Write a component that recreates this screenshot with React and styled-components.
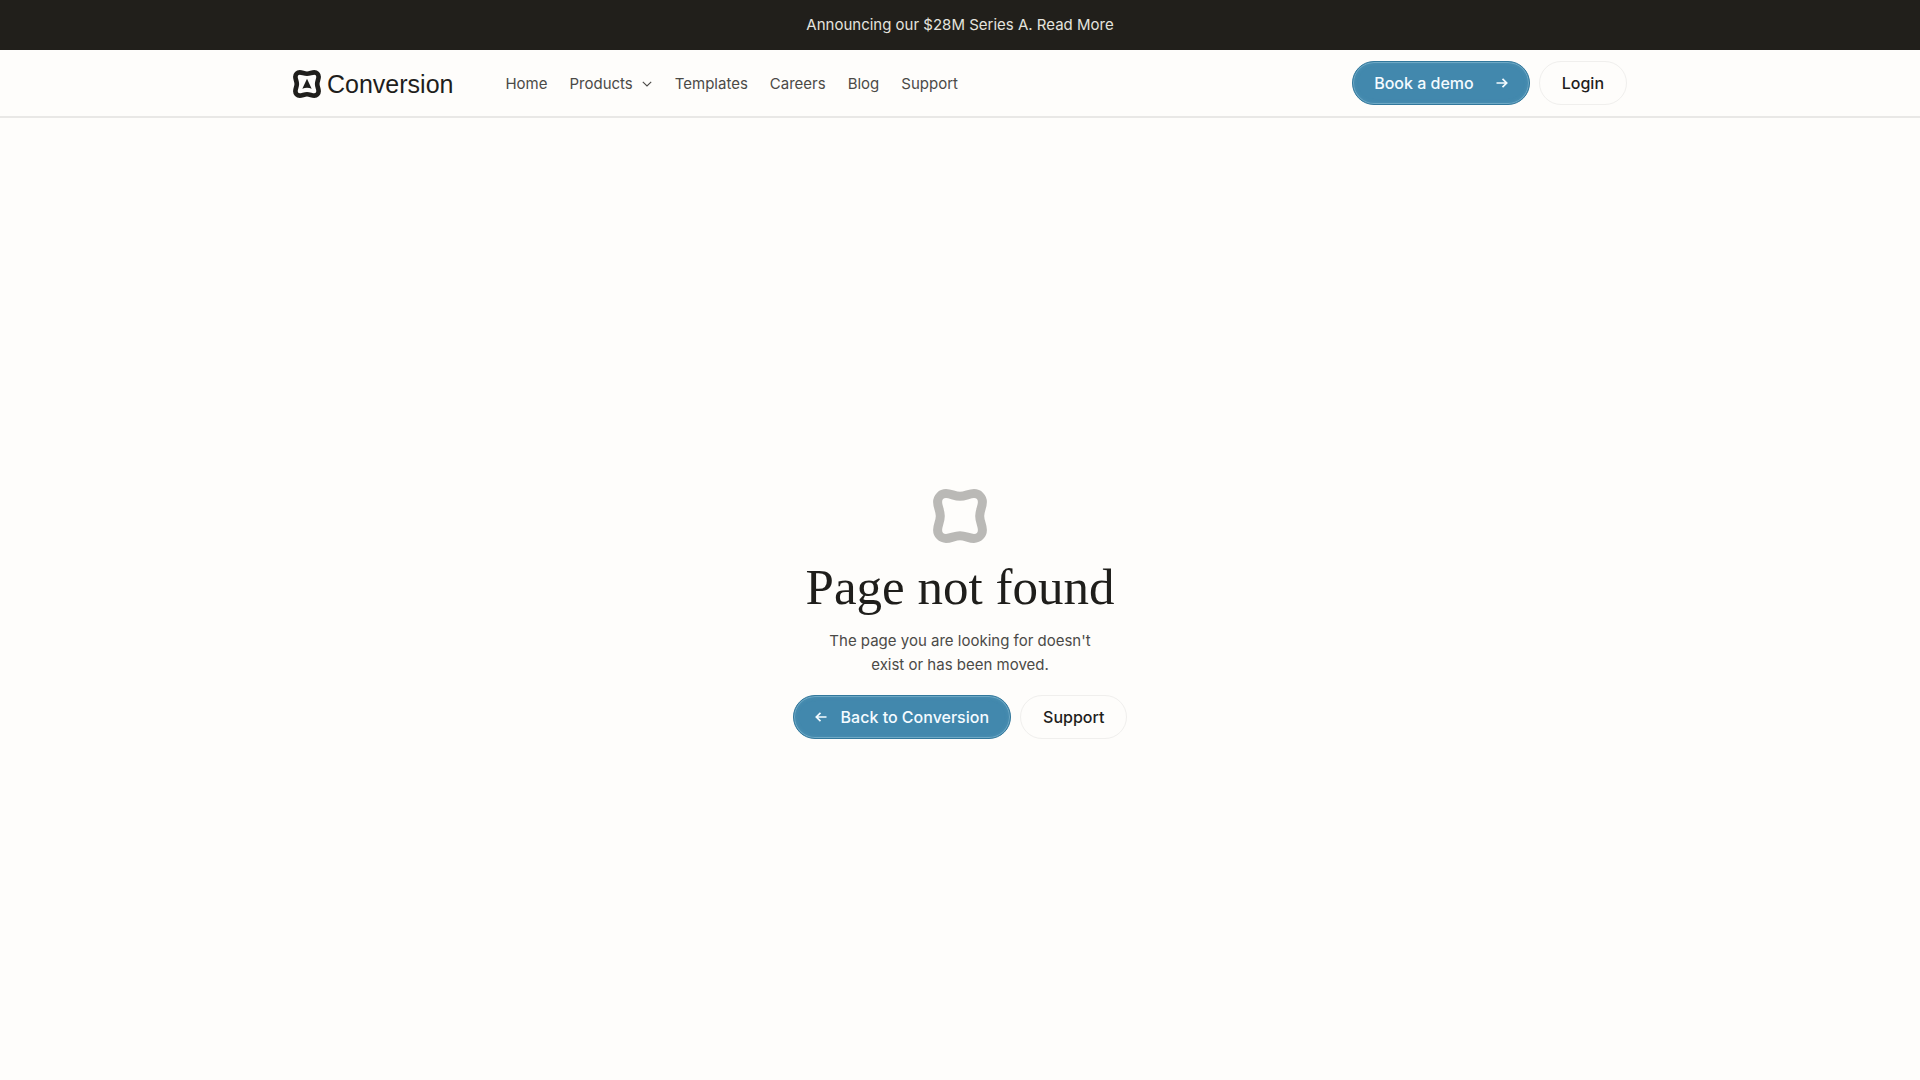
import React from "react";
import styled, { createGlobalStyle, css } from "styled-components";

const GlobalStyle = createGlobalStyle`
  *, *::before, *::after { box-sizing: border-box; }
  html, body { margin: 0; padding: 0; }
  body {
    background: #fefdfb;
    color: #1f1e1b;
    font-family: Inter, "Liberation Sans", sans-serif;
    font-size: 15px;
    line-height: 24px;
  }
`;

const Page = styled.div`
  display: flex;
  flex-direction: column;
  min-height: 100vh;
`;

const Banner = styled.a`
  display: flex;
  align-items: center;
  justify-content: center;
  height: 50px;
  background: #211f1b;
  color: #e4e3de;
  text-decoration: none;
`;

const Header = styled.header`
  border-bottom: 2px solid #e9e8e6;
  padding: 11px 24px;
`;

const HeaderInner = styled.div`
  display: flex;
  align-items: center;
  justify-content: space-between;
  max-width: 1334px;
  margin: 0 auto;
`;

const Left = styled.div`
  display: flex;
  align-items: center;
  gap: 52px;
  padding-top: 2px;
`;

const Brand = styled.a`
  display: flex;
  align-items: center;
  gap: 6px;
  color: #1f1e1b;
  font-family: "Liberation Sans", Arial, sans-serif;
  font-size: 25px;
  line-height: 28px;
  text-decoration: none;
`;

const Nav = styled.nav`
  display: flex;
  align-items: center;
  gap: 22px;
`;

const navItem = css`
  color: #4b4a47;
  font: inherit;
  text-decoration: none;
`;

const NavLink = styled.a`
  ${navItem}
`;

const NavMenu = styled.button`
  ${navItem}
  display: flex;
  align-items: center;
  gap: 8px;
  padding: 0;
  border: 0;
  background: none;
  cursor: pointer;
`;

const Actions = styled.div`
  display: flex;
  gap: 9px;
`;

const Pill = styled.a`
  display: flex;
  align-items: center;
  gap: ${(p) => p.$gap || "0"};
  height: 44px;
  padding: 0 ${(p) => (p.$primary ? "21px" : "22px")};
  border: 1px solid ${(p) => (p.$primary ? "#32789c" : "#f0efed")};
  border-radius: 22px;
  background: ${(p) => (p.$primary ? "#4288ad" : "#fefdfb")};
  box-shadow: ${(p) =>
    p.$primary
      ? "inset 0 0 0 1px #6fa9c5, inset 0 0 5px rgba(120, 178, 206, 0.3)"
      : "none"};
  color: ${(p) => (p.$primary ? "#f4fbff" : "#1f1e1b")};
  font-size: 16px;
  font-weight: 500;
  text-decoration: none;
  white-space: nowrap;
`;

const Main = styled.main`
  flex: 1;
  display: flex;
  flex-direction: column;
  align-items: center;
  justify-content: center;
  padding: 30px 24px 0;
  text-align: center;
`;

const Title = styled.h1`
  margin: 14px 0 12px;
  font-family: "Liberation Serif", serif;
  font-size: 51px;
  font-weight: 400;
  line-height: 60px;
`;

const Message = styled.p`
  max-width: 270px;
  margin: 0 0 18px;
  color: #4b4a47;
`;

function Frame({ size, color, children }) {
  return (
    <svg width={size} height={size} viewBox="0 0 54 54" fill="none" aria-hidden="true">
      <path
        d="M27 7.3C32.5 7.3 36 4.6 41 4.6A8.4 8.4 0 0 1 49.4 13C49.4 18 46.7 21.5 46.7 27C46.7 32.5 49.4 36 49.4 41A8.4 8.4 0 0 1 41 49.4C36 49.4 32.5 46.7 27 46.7C21.5 46.7 18 49.4 13 49.4A8.4 8.4 0 0 1 4.6 41C4.6 36 7.3 32.5 7.3 27C7.3 21.5 4.6 18 4.6 13A8.4 8.4 0 0 1 13 4.6C18 4.6 21.5 7.3 27 7.3Z"
        stroke={color}
        strokeWidth="9"
      />
      {children}
    </svg>
  );
}

function Arrow({ left }) {
  return (
    <svg width="12" height="12" viewBox="0 0 12 12" fill="none" stroke="currentColor" strokeWidth="1.7" aria-hidden="true">
      <path d={left ? "M11.5 6H1.5M5.5 1.8L1.3 6L5.5 10.2" : "M.5 6H10.5M6.5 1.8L10.7 6L6.5 10.2"} />
    </svg>
  );
}

function Chevron() {
  return (
    <svg width="12" height="12" viewBox="0 0 12 12" fill="none" stroke="currentColor" strokeWidth="1.1" aria-hidden="true">
      <path d="M1.8 3.8L6 8L10.2 3.8" />
    </svg>
  );
}

export default function App() {
  return (
    <>
      <GlobalStyle />
      <Page>
        <Banner href="#series-a">Announcing our $28M Series A. Read More</Banner>
        <Header>
          <HeaderInner>
            <Left>
              <Brand href="#home">
                <Frame size={28} color="#1f1e1b">
                  <path d="M27 17L36 36Q27 32 18 36Z" fill="#1f1e1b" />
                </Frame>
                Conversion
              </Brand>
              <Nav>
                <NavLink href="#home">Home</NavLink>
                <NavMenu type="button">
                  Products
                  <Chevron />
                </NavMenu>
                <NavLink href="#templates">Templates</NavLink>
                <NavLink href="#careers">Careers</NavLink>
                <NavLink href="#blog">Blog</NavLink>
                <NavLink href="#support">Support</NavLink>
              </Nav>
            </Left>
            <Actions>
              <Pill $primary $gap="22px" href="#demo">
                Book a demo
                <Arrow />
              </Pill>
              <Pill href="#login">Login</Pill>
            </Actions>
          </HeaderInner>
        </Header>
        <Main>
          <Frame size={54} color="#bab9b6" />
          <Title>Page not found</Title>
          <Message>The page you are looking for doesn't exist or has been moved.</Message>
          <Actions>
            <Pill $primary $gap="14px" href="#home">
              <Arrow left />
              Back to Conversion
            </Pill>
            <Pill href="#support">Support</Pill>
          </Actions>
        </Main>
      </Page>
    </>
  );
}
